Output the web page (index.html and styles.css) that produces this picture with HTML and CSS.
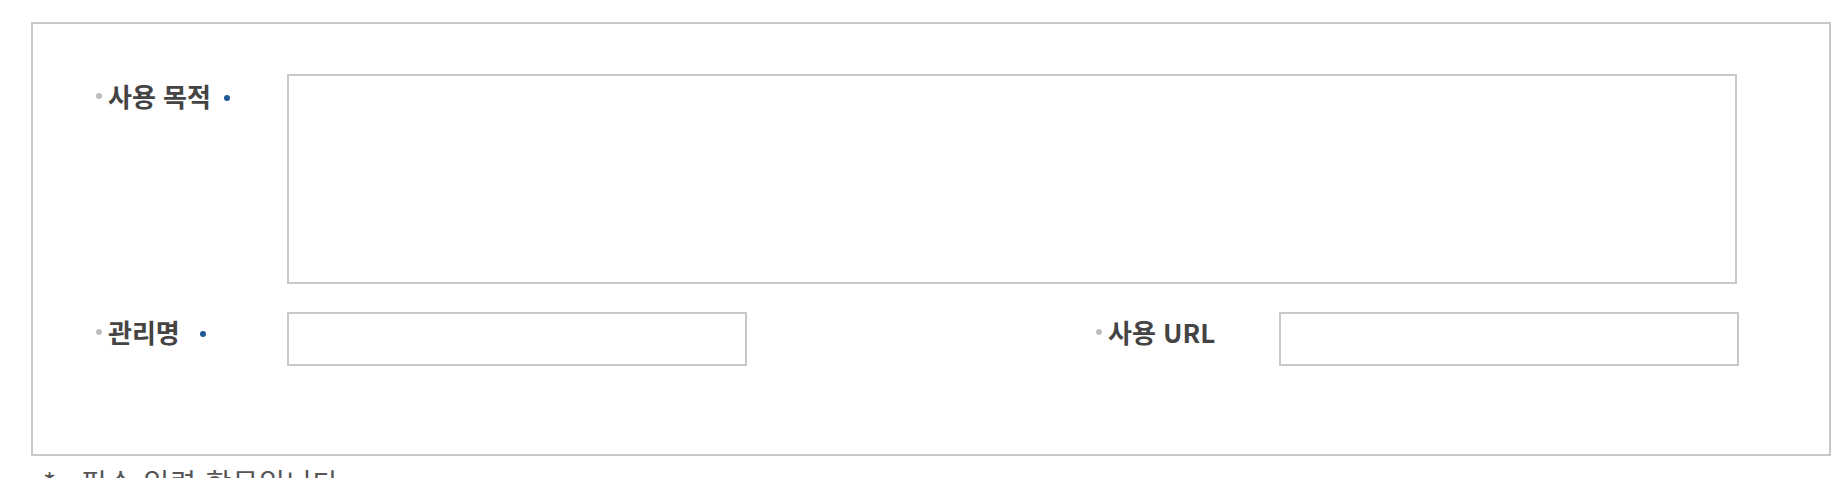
FILE: index.html
```html
<!DOCTYPE html>
<html lang="ko">
<head>
    <meta charset="UTF-8">
    <meta name="viewport" content="width=device-width, initial-scale=1.0">
    <title>사용 신청</title>
    <link rel="stylesheet" href="styles.css">
</head>
<body>
    <div class="page">
        <form class="form-box">
            <div class="form-row row-purpose">
                <label class="field-label label-top" for="purpose">
                    <span class="bullet"></span>사용 목적<span class="req"></span>
                </label>
                <textarea id="purpose" class="field-area"></textarea>
            </div>
            <div class="form-row row-split">
                <label class="field-label" for="manageName">
                    <span class="bullet"></span>관리명<span class="req req-wide"></span>
                </label>
                <input type="text" id="manageName" class="field-input">
                <span class="spacer"></span>
                <label class="field-label" for="useUrl">
                    <span class="bullet"></span>사용 URL
                </label>
                <input type="text" id="useUrl" class="field-input">
            </div>
        </form>
        <p class="notice"><span class="star">*</span>필수 입력 항목입니다.</p>
    </div>
</body>
</html>
```

FILE: styles.css
```css
* {
    margin: 0;
    padding: 0;
    box-sizing: border-box;
}

body {
    font-family: "Noto Sans CJK KR", "Noto Sans", sans-serif;
    background: #ffffff;
    color: #444444;
}

.page {
    padding: 22px 0 0 31px;
}

.form-box {
    width: 1800px;
    height: 434px;
    border: 2px solid #c8c8c8;
    padding: 50px 0 0 61px;
}

.form-row {
    display: grid;
}

.row-purpose {
    grid-template-columns: 193px 1450px;
    margin-bottom: 28px;
}

.row-split {
    grid-template-columns: 193px 460px 347px 185px 460px;
    align-items: center;
}

.field-label {
    display: flex;
    align-items: center;
    font-size: 26px;
    line-height: 26px;
    font-weight: 700;
    color: #444444;
    padding-bottom: 14px;
}

.label-top {
    align-self: start;
    padding: 9px 0 0;
}

.bullet {
    width: 6px;
    height: 6px;
    border-radius: 50%;
    background: #bdbdbd;
    margin: 0 6px 0 2px;
}

.req {
    width: 6px;
    height: 6px;
    border-radius: 50%;
    background: #1f5a96;
    margin: 4px 0 0 13px;
}

.req-wide {
    margin-left: 20px;
}

.field-area {
    height: 210px;
    border: 2px solid #c8c8c8;
    resize: none;
    outline: none;
}

.field-input {
    height: 54px;
    border: 2px solid #c8c8c8;
    outline: none;
}

.notice {
    margin: 12px 0 0 12px;
    font-size: 28px;
    line-height: 28px;
    letter-spacing: 1px;
    color: #555555;
}

.star {
    margin-right: 24px;
}
```
